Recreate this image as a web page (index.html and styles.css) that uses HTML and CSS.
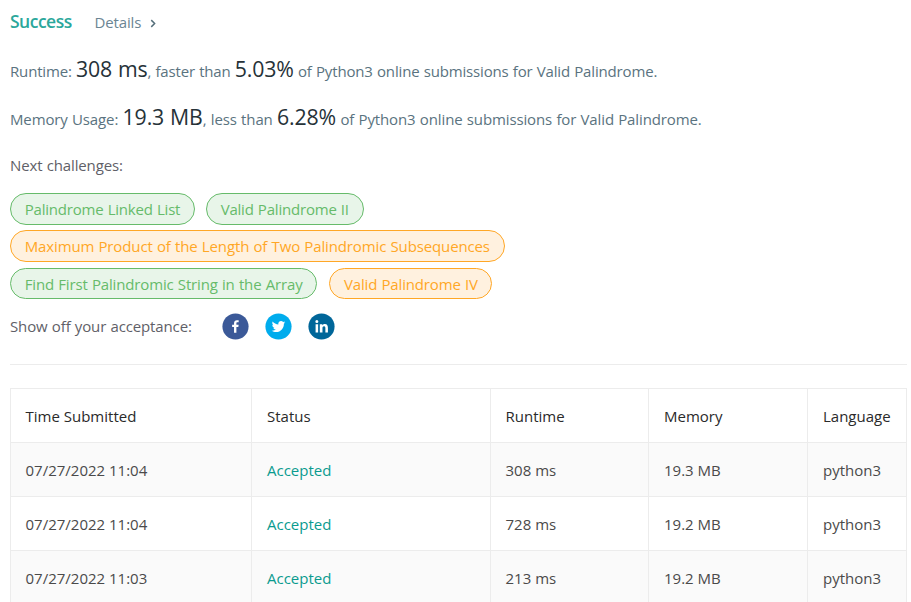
FILE: index.html
```html
<!DOCTYPE html>
<html lang="en">
<head>
<meta charset="utf-8">
<title>Submissions</title>
<link rel="stylesheet" href="styles.css">
</head>
<body>
<main class="page">
  <header class="result">
    <h1 class="state">Success</h1>
    <a class="details">Details
      <svg class="chevron" viewBox="0 0 8 8"><path d="M2 1l3 3-3 3"/></svg>
    </a>
  </header>
  <p class="stat runtime">Runtime: <span class="value">308 ms</span>, faster than <span class="value">5.03%</span> of Python3 online submissions for Valid Palindrome.</p>
  <p class="stat memory">Memory Usage: <span class="value">19.3 MB</span>, less than <span class="value">6.28%</span> of Python3 online submissions for Valid Palindrome.</p>
  <p class="next">Next challenges:</p>
  <div class="challenges">
    <div class="row first">
      <a class="pill easy">Palindrome Linked List</a>
      <a class="pill easy">Valid Palindrome II</a>
    </div>
    <div class="row">
      <a class="pill medium">Maximum Product of the Length of Two Palindromic Subsequences</a>
    </div>
    <div class="row short">
      <a class="pill easy">Find First Palindromic String in the Array</a>
      <a class="pill medium">Valid Palindrome IV</a>
    </div>
  </div>
  <div class="share">
    <span class="share-label">Show off your acceptance:</span>
    <svg class="social" viewBox="0 0 64 64"><circle cx="32" cy="32" r="31" fill="#3b5998"/><path fill="#fff" d="M34.1 47V33.3h4.6l.7-5.3h-5.3v-3.400c0-1.500.4-2.600 2.600-2.600h2.800v-4.800c-.5-.1-2.200-.2-4.100-.2-4.100 0-6.900 2.500-6.900 7V28H24v5.300h4.500V47h5.600z"/></svg>
    <svg class="social" viewBox="0 0 64 64"><circle cx="32" cy="32" r="31" fill="#00aced"/><path fill="#fff" d="M48 22.1c-1.2.5-2.4.9-3.8 1 1.4-.8 2.4-2.1 2.9-3.6-1.3.8-2.7 1.3-4.2 1.6-1.2-1.3-2.9-2.1-4.8-2.1-3.6 0-6.6 2.9-6.6 6.6 0 .5.1 1 .2 1.5-5.5-.3-10.3-2.9-13.5-6.9-.6 1-.9 2.1-.9 3.3 0 2.3 1.2 4.3 2.9 5.5-1.1 0-2.1-.3-3-.8v.1c0 3.2 2.3 5.8 5.3 6.4-.6.1-1.1.2-1.7.2-.4 0-.8 0-1.2-.1.8 2.6 3.3 4.5 6.1 4.6-2.2 1.8-5.1 2.8-8.2 2.8-.5 0-1.1 0-1.6-.1 2.9 1.9 6.4 3 10.1 3 12.1 0 18.7-10 18.7-18.7v-.8c1.3-1 2.4-2.1 3.3-3.5z"/></svg>
    <svg class="social" viewBox="0 0 64 64"><circle cx="32" cy="32" r="31" fill="#006699"/><path fill="#fff" d="M18 26.4h6V46h-6V26.4zM21 16.5a3.6 3.6 0 1 1 0 7.2 3.6 3.6 0 0 1 0-7.2M28 26.4h5.9v2.7h.1c.8-1.6 2.8-3.2 5.8-3.2C46 25.900 47.200 30 47.200 35.200V46h-6v-9.500c0-2.300 0-5.200-3.200-5.200s-3.700 2.500-3.700 5V46H28V26.400z"/></svg>
  </div>
  <table class="submissions">
    <thead>
      <tr><th class="c-time">Time Submitted</th><th class="c-status">Status</th><th class="c-run">Runtime</th><th class="c-mem">Memory</th><th class="c-lang">Language</th></tr>
    </thead>
    <tbody>
      <tr><td>07/27/2022 11:04</td><td class="ok">Accepted</td><td>308 ms</td><td>19.3 MB</td><td>python3</td></tr>
      <tr><td>07/27/2022 11:04</td><td class="ok">Accepted</td><td>728 ms</td><td>19.2 MB</td><td>python3</td></tr>
      <tr><td>07/27/2022 11:03</td><td class="ok">Accepted</td><td>213 ms</td><td>19.2 MB</td><td>python3</td></tr>
    </tbody>
  </table>
</main>
</body>
</html>
```
FILE: styles.css
```css
* { box-sizing: border-box; }

body {
  margin: 0;
  height: 602px;
  overflow: hidden;
  background: #fff;
  color: #5f5f68;
  font: 400 15px/24px "Open Sans", sans-serif;
  letter-spacing: -0.13px;
  word-spacing: 0.5px;
}

.page { width: 907px; padding: 9px 0 0 10px; }

.result { display: flex; align-items: baseline; height: 36px; }

.state {
  margin: 0;
  width: 84.5px;
  color: #2ba79b;
  font-size: 17.5px;
  font-weight: 600;
  letter-spacing: -0.5px;
}

.details { display: flex; align-items: center; color: #6b8593; }

.chevron {
  width: 9px;
  height: 9px;
  margin: 2px 0 0 8px;
  fill: none;
  stroke: #546e7a;
  stroke-width: 1.3;
}

.stat {
  margin: 0;
  height: 48px;
  line-height: 48px;
  color: #5a7380;
  white-space: nowrap;
}

.runtime { letter-spacing: -0.16px; }

.memory { letter-spacing: -0.12px; }

.value { color: #263238; font-size: 21.3px; }

.next { margin: 12px 0 16px; }

.challenges { display: flex; flex-direction: column; gap: 5px; }

.row { display: flex; gap: 11px; height: 32px; }

.first { letter-spacing: -0.2px; }

.short { height: 31px; margin-top: 1px; gap: 12px; letter-spacing: -0.15px; }

.pill {
  padding: 0 13.7px;
  border: 1px solid;
  border-radius: 16px;
  line-height: 31px;
  white-space: nowrap;
}

.easy { color: #66bb6a; background: #e8f5e9; }

.medium { color: #ffa726; background: #fff1df; }

.share {
  display: flex;
  align-items: center;
  gap: 16px;
  height: 66px;
  padding-bottom: 11px;
  border-bottom: 1px solid #ececec;
}

.share-label { width: 196px; }

.social { width: 27px; height: 27px; }

.submissions {
  width: 897px;
  margin-top: 23px;
  border-collapse: collapse;
  table-layout: fixed;
  letter-spacing: 0;
  word-spacing: 0;
}

.submissions th,
.submissions td {
  height: 54px;
  padding: 1px 0 0 15px;
  border: 1px solid #ececec;
  text-align: left;
  color: #4a4a4a;
  font-weight: 400;
}

.submissions th { color: #2a2a2a; }

.submissions th:nth-child(-2n+3),
.submissions td:nth-child(-2n+3) { padding-left: 14.5px; }

.submissions tbody tr:nth-child(odd) { background: #fafafa; }

.submissions .ok { color: #0a9b8f; }

.c-time { width: 241px; }
.c-status { width: 239px; }
.c-run { width: 158px; }
.c-mem { width: 159px; }
.c-lang { width: 99px; }
```
